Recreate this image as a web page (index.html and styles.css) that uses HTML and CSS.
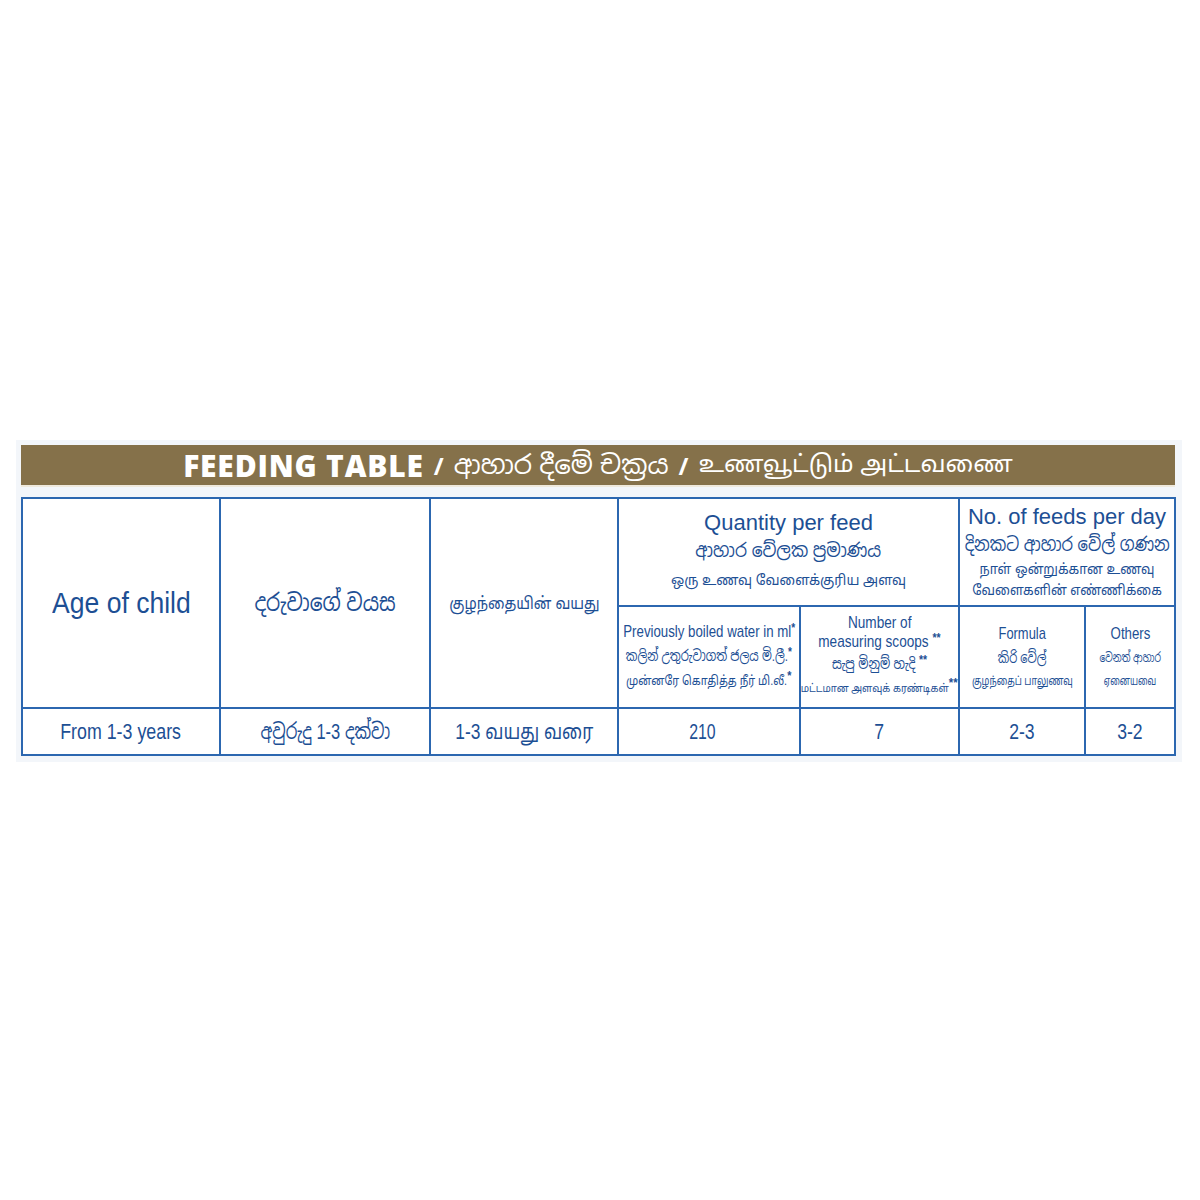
FILE: index.html
```html
<!DOCTYPE html>
<html>
<head>
<meta charset="utf-8">
<link rel="stylesheet" href="styles.css">
</head>
<body>
<div class="panel">
  <div class="bar">
    <span class="bar-en">FEEDING TABLE</span><span class="slash">/</span><span class="bar-si">ආහාර දීමේ චක්‍රය</span><span class="slash">/</span><span class="bar-ta">உணவூட்டும் அட்டவணை</span>
  </div>
  <table class="feed">
    <colgroup>
      <col class="c1"><col class="c2"><col class="c3"><col class="c4"><col class="c5"><col class="c6"><col class="c7">
    </colgroup>
    <tr class="r1">
      <th rowspan="2" class="big"><span class="n">Age of child</span></th>
      <th rowspan="2" class="big-si"><span class="n">දරුවාගේ වයස</span></th>
      <th rowspan="2" class="mid-ta"><span class="n">குழந்தையின் வயது</span></th>
      <th colspan="2" class="grp grp1">
        <div class="ln g-en"><span class="n">Quantity per feed</span></div>
        <div class="ln g-si"><span class="n">ආහාර වේලක ප්‍රමාණය</span></div>
        <div class="ln g-ta"><span class="n">ஒரு உணவு வேளைக்குரிய அளவு</span></div>
      </th>
      <th colspan="2" class="grp grp2">
        <div class="ln g-en"><span class="n">No. of feeds per day</span></div>
        <div class="ln g-si"><span class="n">දිනකට ආහාර වේල් ගණන</span></div>
        <div class="ln g-ta"><span class="n">நாள் ஒன்றுக்கான உணவு</span></div>
        <div class="ln g-ta"><span class="n">வேளைகளின் எண்ணிக்கை</span></div>
      </th>
    </tr>
    <tr class="r2">
      <th class="sub sub1">
        <div class="ln s-en"><span class="n">Previously boiled water in ml<sup>*</sup></span></div>
        <div class="ln s-si"><span class="n">කලින් උතුරුවාගත් ජලය මි.ලී.<sup>*</sup></span></div>
        <div class="ln s-ta"><span class="n">முன்னரே கொதித்த நீர் மி.லீ.<sup>*</sup></span></div>
      </th>
      <th class="sub sub2">
        <div class="ln s-en2"><span class="n">Number of</span></div>
        <div class="ln s-en2"><span class="n">measuring scoops <sup>**</sup></span></div>
        <div class="ln s-si"><span class="n">සැපු මිනුම් හැදි <sup>**</sup></span></div>
        <div class="ln s-ta tiny"><span class="n">மட்டமான அளவுக் கரண்டிகள்<sup>**</sup></span></div>
      </th>
      <th class="sub sub3">
        <div class="ln s-en"><span class="n">Formula</span></div>
        <div class="ln s-si"><span class="n">කිරි වේල්</span></div>
        <div class="ln s-ta3"><span class="n">குழந்தைப் பாலுணவு</span></div>
      </th>
      <th class="sub sub3 sub4">
        <div class="ln s-en"><span class="n">Others</span></div>
        <div class="ln s-si"><span class="n">වෙනත් ආහාර</span></div>
        <div class="ln s-ta3"><span class="n">ஏனையவை</span></div>
      </th>
    </tr>
    <tr class="r3">
      <td class="d1"><span class="n">From 1-3 years</span></td>
      <td class="d2"><span class="n">අවුරුදු 1-3 දක්වා</span></td>
      <td class="d3"><span class="n">1-3 வயது வரை</span></td>
      <td class="d4"><span class="n">210</span></td>
      <td><span class="n">7</span></td>
      <td><span class="n">2-3</span></td>
      <td><span class="n">3-2</span></td>
    </tr>
  </table>
</div>
</body>
</html>
```

FILE: styles.css
```css
html, body {
  margin: 0;
  padding: 0;
  background: #ffffff;
}
body {
  font-family: "Liberation Sans", "Noto Sans Sinhala", "Noto Sans Tamil", sans-serif;
  color: #1d4f94;
}
.panel {
  margin: 440px 0 0 16px;
  width: 1166px;
  padding: 5px 7px 6px 5px;
  box-sizing: border-box;
  background: #f3f6fa;
}
.bar {
  height: 42px;
  background: #85714a;
  color: #ffffff;
  display: flex;
  align-items: center;
  justify-content: center;
  gap: 10px;
  font-family: "Liberation Sans", "Noto Sans Sinhala", "Noto Sans Tamil", sans-serif;
  font-size: 24px;
  border-bottom: 2px solid #efe9dc;
  box-sizing: border-box;
  white-space: nowrap;
}
.bar-en {
  font-family: "Open Sans", "Liberation Sans", sans-serif;
  font-weight: 800;
  font-size: 30px;
  letter-spacing: 0.8px;
}
.slash {
  font-family: "Open Sans", "Liberation Sans", sans-serif;
  font-weight: bold;
  font-size: 24px;
}
.bar-si {
  font-size: 26px;
}
.bar-ta {
  font-size: 24px;
}
.feed {
  margin-top: 10px;
  width: 1154px;
  border-collapse: collapse;
  table-layout: fixed;
  background: #ffffff;
}
.c1 { width: 198px; }
.c2 { width: 210px; }
.c3 { width: 188px; }
.c4 { width: 182px; }
.c5 { width: 159px; }
.c6 { width: 126px; }
.c7 { width: 90px; }
.feed th, .feed td {
  border: 2px solid #2c67b0;
  text-align: center;
  vertical-align: middle;
  font-weight: normal;
  padding: 0;
  line-height: 1;
  overflow: visible;
}
.n {
  display: inline-block;
  white-space: nowrap;
  transform: scaleX(var(--sx, 0.84));
}
.ln {
  display: flex;
  justify-content: center;
  white-space: nowrap;
}
.r1 { height: 108px; }
.r2 { height: 102px; }
.r3 { height: 47px; }
.big {
  font-size: 30px;
  padding-top: 2px;
  --sx: 0.885;
}
.big-si {
  font-size: 24px;
}
.mid-ta {
  font-size: 17px;
}
.grp {
  vertical-align: top;
}
.grp1 { padding-top: 12px; }
.grp2 { padding-top: 8px; }
.g-en {
  font-size: 22px;
  line-height: 26px;
  --sx: 1;
}
.g-si {
  font-size: 19px;
  line-height: 30px;
  --sx: 0.9;
}
.g-ta {
  font-size: 14px;
  line-height: 28px;
  --sx: 0.96;
}
.grp2 .g-si { line-height: 29px; --sx: 0.86; }
.grp2 .g-ta { line-height: 21px; --sx: 0.92; }
.sub {
  vertical-align: top;
}
.sub1 { padding-top: 22px; }
.sub2 { padding-top: 5px; }
.sub3 { padding-top: 19px; }
.s-en {
  font-size: 17px;
  line-height: 22px;
}
.sub1 .s-en { --sx: 0.78; }
.s-en2 {
  font-size: 17px;
  line-height: 19px;
  --sx: 0.8;
}
.s-si {
  font-size: 15px;
  line-height: 25px;
  --sx: 0.77;
}
.sub2 .s-si { --sx: 0.8; }
.s-ta {
  font-size: 13px;
  line-height: 25px;
  --sx: 0.83;
}
.tiny {
  font-size: 11px;
  --sx: 0.88;
}
.s-ta3 {
  font-size: 12px;
  line-height: 22px;
}
.sub3 .s-en { --sx: 0.76; }
.sub3 .s-si { --sx: 0.76; }
.sub3 .s-ta3 { --sx: 0.76; }
.sub4 .s-en { --sx: 0.78; }
.sub4 .s-si { font-size: 13px; --sx: 0.71; }
.sub4 .s-ta3 { --sx: 0.69; }
.sub sup {
  font-size: 13px;
  font-weight: bold;
  line-height: 0;
  vertical-align: 5px;
}
.r3 td {
  font-size: 22px;
  --sx: 0.8;
}
.r3 .d1 { --sx: 0.81; }
.r3 .d2 { --sx: 0.75; }
.r3 .d3 { --sx: 0.79; }
.r3 .d4 { --sx: 0.72; padding-right: 14px; }
```
